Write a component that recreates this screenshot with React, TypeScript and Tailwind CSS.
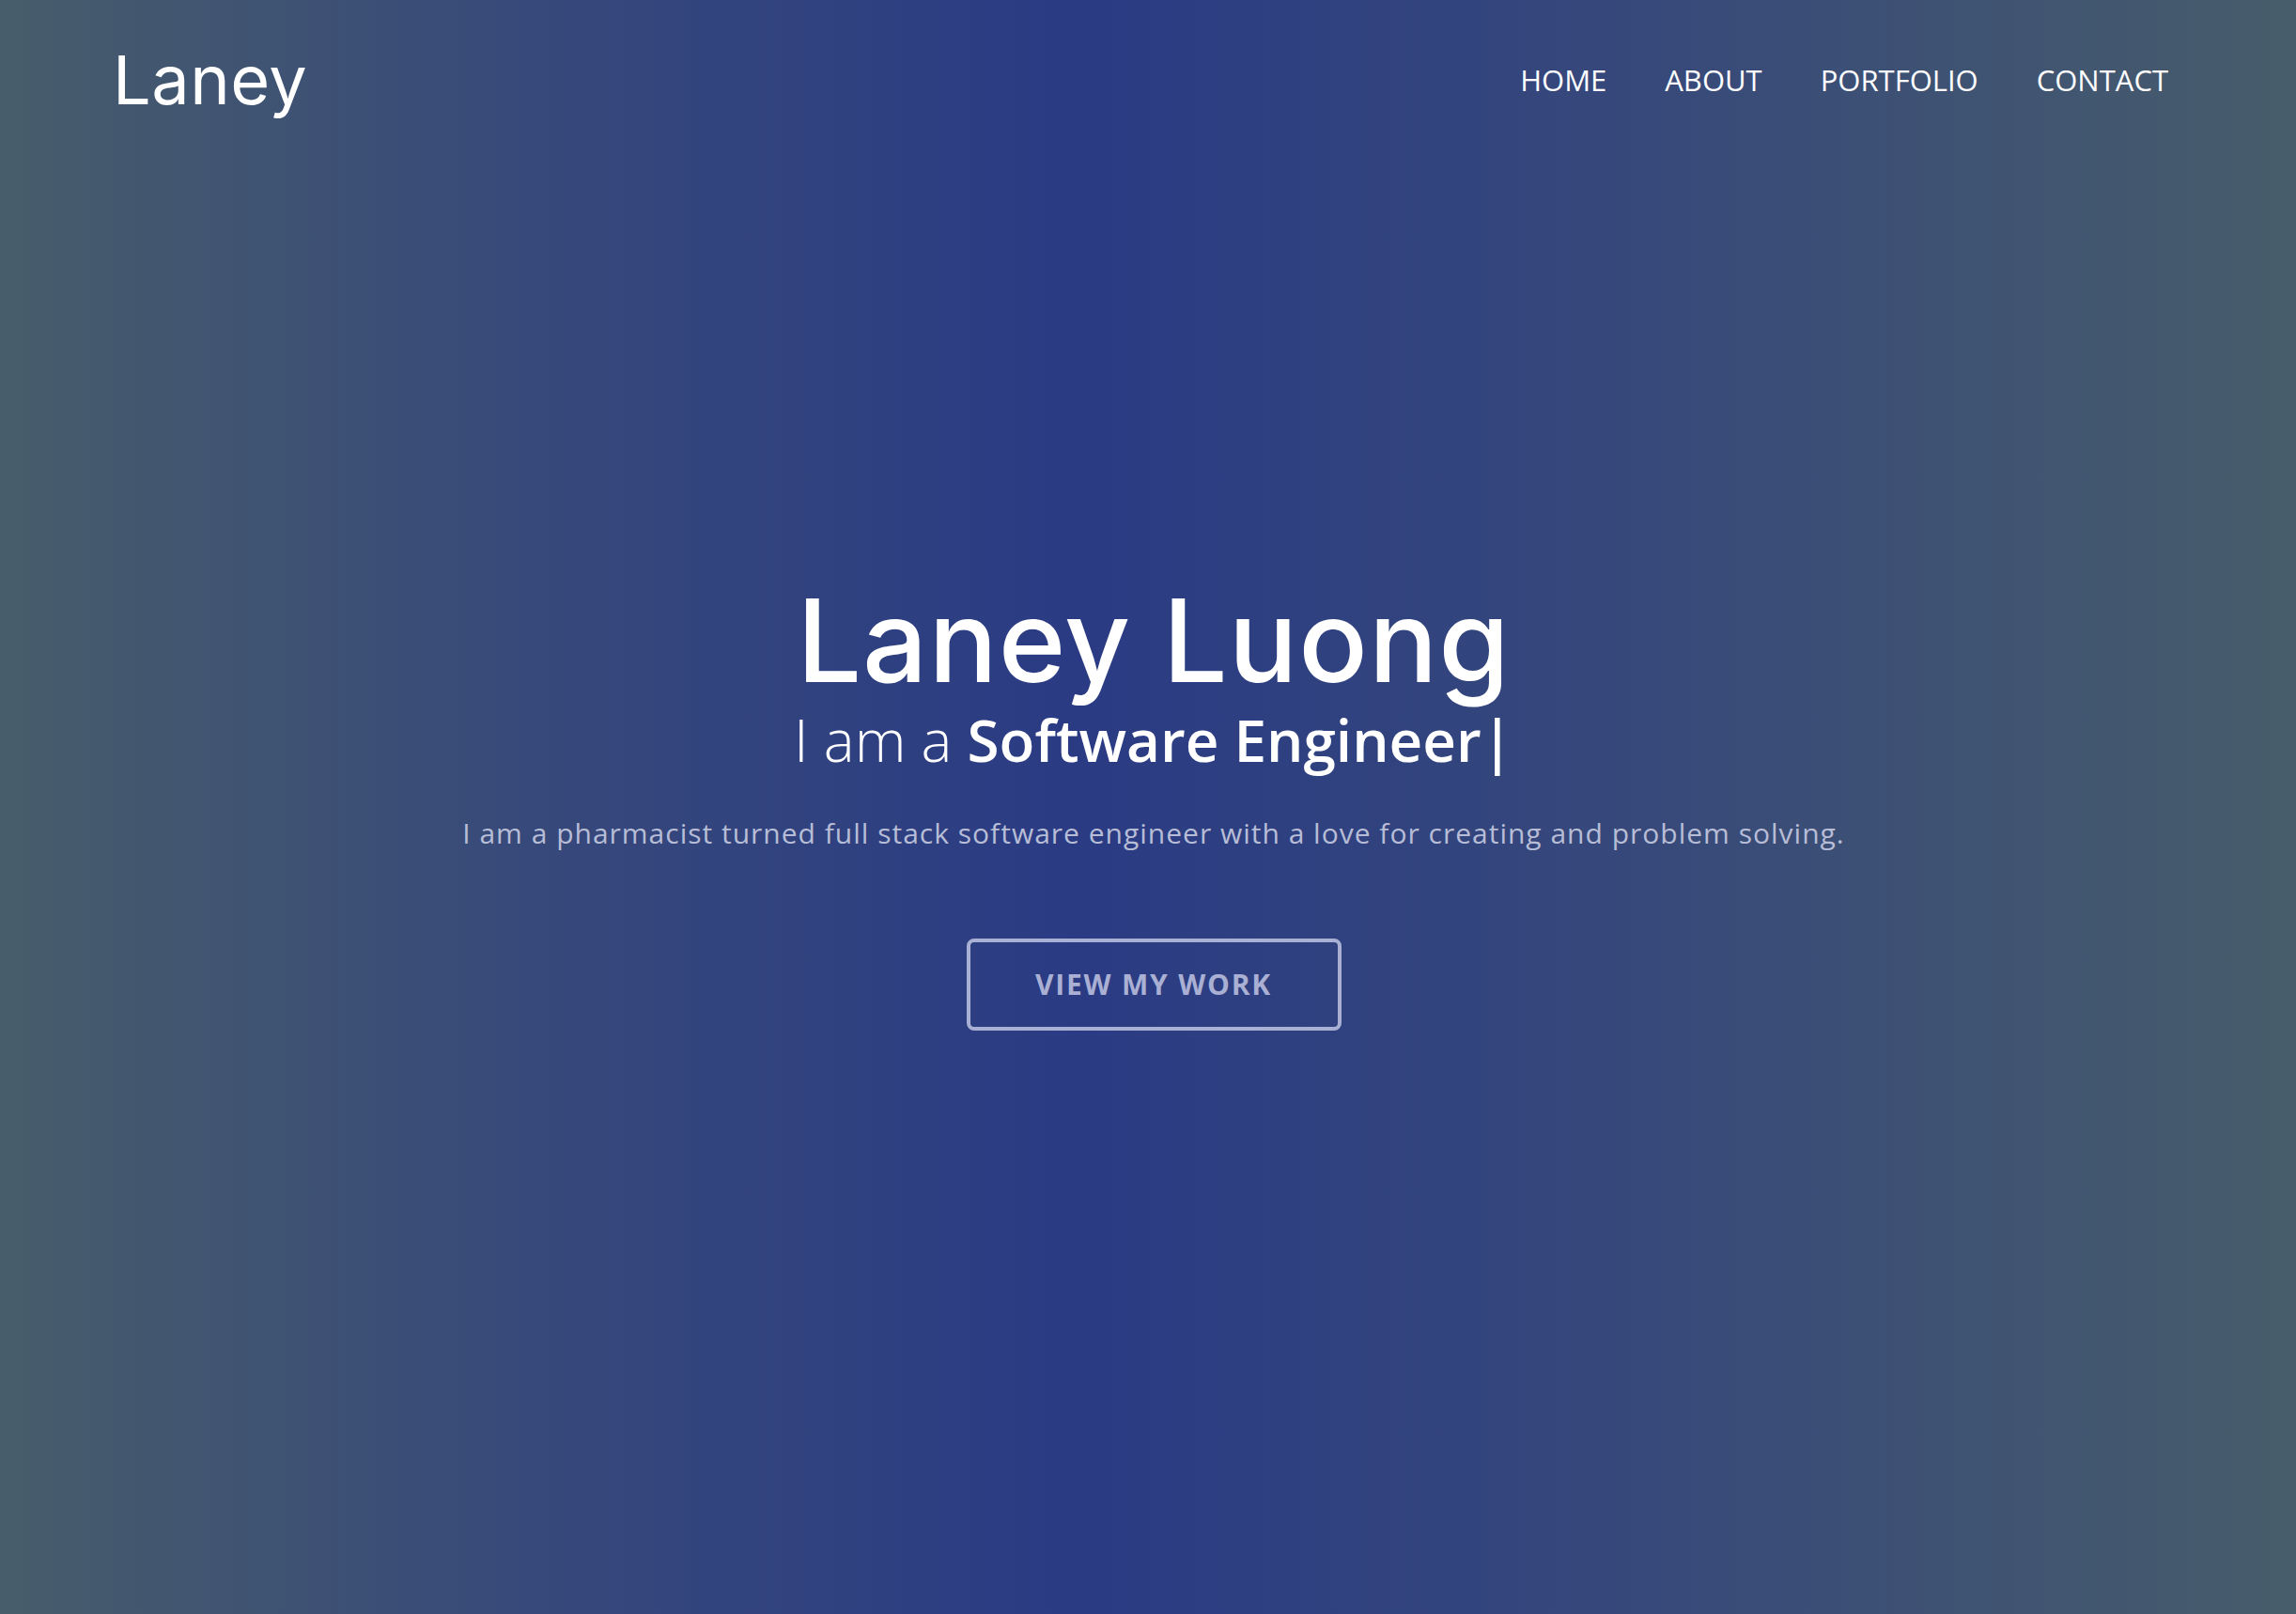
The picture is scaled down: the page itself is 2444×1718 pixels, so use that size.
import React from "react";

export default function App() {
  return (
    <div className="relative h-[1718px] w-full overflow-hidden bg-[linear-gradient(to_right,#475d6b_0%,#37497a_23%,#2a3b84_47%,#37497a_72%,#475d6b_100%)] font-['Open_Sans',sans-serif]">
      <header className="absolute left-0 right-0 top-0 flex items-center justify-between pl-[120px] pr-[136px] pt-[49px]">
        <div className="font-['Inter',sans-serif] text-[72px] font-normal leading-none text-white tracking-[0.5px]">
          Laney
        </div>
        <nav className="flex gap-[62px] text-[31px] text-white">
          <a>HOME</a>
          <a>ABOUT</a>
          <a>PORTFOLIO</a>
          <a>CONTACT</a>
        </nav>
      </header>
      <main className="flex h-full flex-col items-center justify-center pl-[12px] text-center">
        <h1 className="font-['Inter',sans-serif] text-[122px] font-medium leading-none tracking-[1px] text-white">
          Laney Luong
        </h1>
        <h2 className="mt-[6px] text-[62px] leading-tight text-white">
          <span className="font-light">I am a </span>
          <span className="font-semibold">Software Engineer</span>
          <span className="font-semibold">|</span>
        </h2>
        <p className="mt-[37px] text-[30px] tracking-[1px] text-[#b7bdd6]">
          I am a pharmacist turned full stack software engineer with a love for creating and problem solving.
        </p>
        <button className="mt-[90px] flex h-[98px] w-[399px] items-center justify-center rounded-lg border-4 border-[#a9b0d3] text-[30px] font-bold tracking-[1.8px] text-[#a9b0d3]">
          VIEW MY WORK
        </button>
      </main>
    </div>
  );
}
